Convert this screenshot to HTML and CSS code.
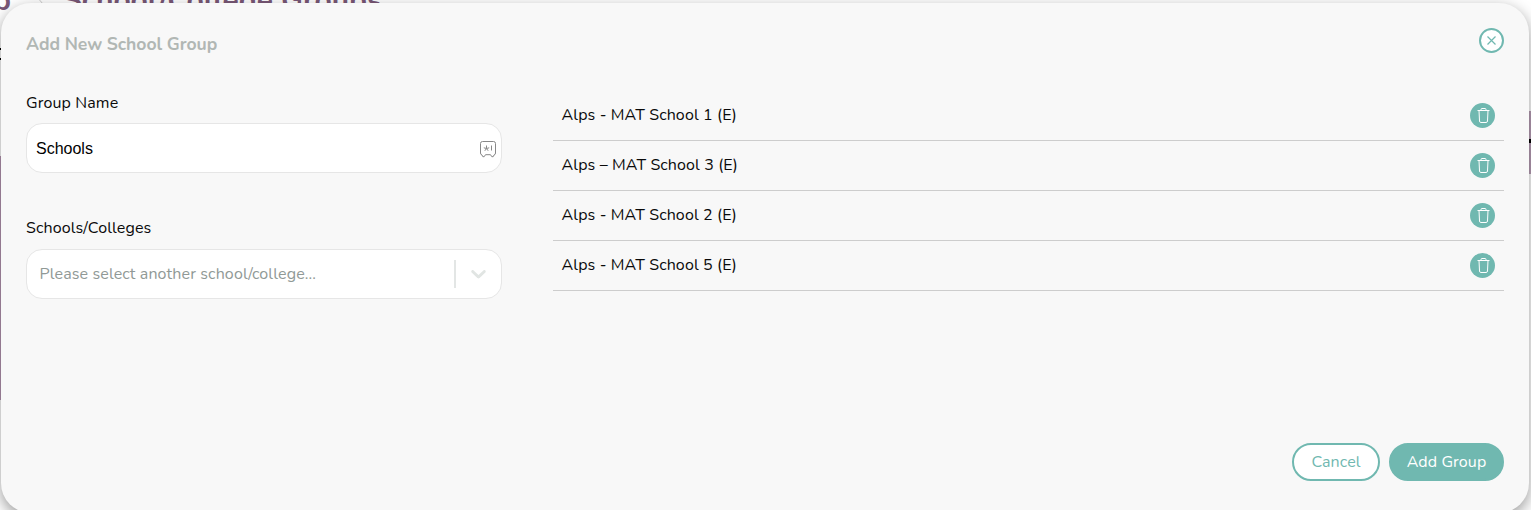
FILE: index.html
```html
<!DOCTYPE html>
<html lang="en">
<head>
<meta charset="utf-8">
<title>School/College Groups</title>
<link rel="stylesheet" href="styles.css">
</head>
<body>
<div class="backdrop">
  <span class="crumb-end">p</span>
  <svg class="crumb-arrow" width="10" height="16" viewBox="0 0 10 16"><path d="M1 4l6 7"/></svg>
  <h1 class="page-title">School/College Groups</h1>
  <span class="left-mark"></span>
  <span class="left-panel"></span>
  <span class="right-panel"></span>
  <span class="right-mark"></span>
</div>
<main class="modal">
  <header class="modal-header">
    <h2 class="modal-title">Add New School Group</h2>
    <button class="close" aria-label="Close"><svg width="9" height="9" viewBox="0 0 9 9"><path d="M.5.5l8 8M8.500.5l-8 8"/></svg></button>
  </header>
  <div class="content">
    <section class="form">
      <label class="label label-name">Group Name</label>
      <div class="field">
        <span class="value">Schools</span>
        <svg class="safe" width="16" height="17" viewBox="0 0 16 17"><path d="M2.500.5h11a2 2 0 0 1 2 2v9.500a2 2 0 0 1-1.500 2l-.8 1.700h-1.400l-1.300-2h-5l-1.300 2H2.800L2 14a2 2 0 0 1-1.500-2V2.500a2 2 0 0 1 2-2z"/><path d="M6.500 4.500v3M3.800 6.800l2.700.7 2.700-.7M4.800 9.800l1.700-2.300 1.700 2.300M11.500 4.500v5"/></svg>
      </div>
      <label class="label label-schools">Schools/Colleges</label>
      <div class="field select">
        <span class="placeholder">Please select another school/college...</span>
        <span class="divider"></span>
        <svg class="chevron" width="25" height="25" viewBox="0 0 20 20"><path d="M4.516 7.548c0.436-0.446 1.043-0.481 1.576 0l3.908 3.747 3.908-3.747c0.533-0.481 1.141-0.446 1.574 0 0.436 0.445 0.408 1.197 0 1.615-0.406 0.418-4.695 4.502-4.695 4.502-0.217 0.223-0.502 0.335-0.787 0.335s-0.570-0.112-0.789-0.335c0 0-4.287-4.084-4.695-4.502s-0.436-1.170 0-1.615z"/></svg>
      </div>
    </section>
    <ul class="schools">
      <li class="school"><span class="school-name">Alps - MAT School 1 (E)</span><button class="remove" aria-label="Remove"><svg width="13" height="15" viewBox="0 0 13 15"><path d="M.5 2.500h12M4 2.500V1.500q0-1 1-1h3q1 0 1 1V2.500M2 2.500l.5 10.500q.1 1.500 1.400 1.500h5.200q1.300 0 1.400-1.500L11 2.500"/></svg></button></li>
      <li class="school"><span class="school-name">Alps – MAT School 3 (E)</span><button class="remove" aria-label="Remove"><svg width="13" height="15" viewBox="0 0 13 15"><path d="M.5 2.500h12M4 2.500V1.500q0-1 1-1h3q1 0 1 1V2.500M2 2.500l.5 10.500q.1 1.500 1.400 1.500h5.200q1.300 0 1.400-1.500L11 2.500"/></svg></button></li>
      <li class="school"><span class="school-name">Alps - MAT School 2 (E)</span><button class="remove" aria-label="Remove"><svg width="13" height="15" viewBox="0 0 13 15"><path d="M.5 2.500h12M4 2.500V1.500q0-1 1-1h3q1 0 1 1V2.500M2 2.500l.5 10.500q.1 1.500 1.400 1.500h5.200q1.300 0 1.400-1.500L11 2.500"/></svg></button></li>
      <li class="school"><span class="school-name">Alps - MAT School 5 (E)</span><button class="remove" aria-label="Remove"><svg width="13" height="15" viewBox="0 0 13 15"><path d="M.5 2.500h12M4 2.500V1.500q0-1 1-1h3q1 0 1 1V2.500M2 2.500l.5 10.500q.1 1.500 1.400 1.500h5.200q1.300 0 1.400-1.500L11 2.500"/></svg></button></li>
    </ul>
  </div>
  <footer class="actions">
    <button class="btn cancel">Cancel</button>
    <button class="btn primary">Add Group</button>
  </footer>
</main>
</body>
</html>
```

FILE: styles.css
```css
* { box-sizing: border-box; margin: 0; padding: 0; }
body {
  height: 510px;
  overflow: hidden;
  background: #fff;
  color: #0a0a0a;
  font: 16px/22px Nunito, Lato, sans-serif;
  letter-spacing: .12px;
}
button { font: inherit; }
.backdrop { position: absolute; inset: 0; overflow: hidden; color: #7a5877; }
.backdrop > * { position: absolute; }
.crumb-end { left: -7px; top: -17px; font-size: 30px; font-weight: 700; line-height: 36px; }
.crumb-arrow { left: 36px; top: -7px; fill: none; stroke: #ccc; }
.page-title { left: 63px; top: -17px; font-size: 30px; line-height: 36px; letter-spacing: -.08px; white-space: nowrap; }
.left-mark { left: 0; top: 48px; width: 1px; height: 12px; border: solid #000; border-width: 2px 0; }
.left-panel { left: 0; top: 156px; width: 2px; height: 244px; background: #b596b2; }
.right-panel { right: 0; top: 111px; width: 4px; height: 63px; background: #b89eb6; }
.right-mark { right: 0; top: 139px; width: 2px; height: 4px; background: #000; }
.modal {
  position: relative;
  display: flex;
  flex-direction: column;
  width: 1528px;
  height: 510px;
  margin: 3px 0 0 1px;
  padding: 25px 25px 32px;
  border-radius: 30px;
  background: #f8f8f8;
  box-shadow: 0 5px 15px rgba(0, 0, 0, .4);
}
.modal-header { display: flex; justify-content: space-between; height: 64px; }
.modal-title { padding-top: 5px; color: #b1b7b4; font-size: 17.600px; line-height: 22px; letter-spacing: -.05px; }
.close {
  display: grid;
  place-items: center;
  width: 25px;
  height: 25px;
  border: 2px solid #70b8b0;
  border-radius: 50%;
  background: #fff;
}
.close svg { fill: none; stroke: #70b8b0; stroke-width: 1.2; }
.content { display: flex; gap: 51px; flex: 1; }
.form { width: 476px; }
.label { display: block; }
.label-schools { margin-top: 44px; }
.field {
  display: flex;
  align-items: center;
  height: 50px;
  margin-top: 9px;
  padding: 0 5px 0 9px;
  border: 1px solid #e6e6e6;
  border-radius: 16px;
  background: #fff;
}
.value { flex: 1; padding-top: 2px; color: #000; font-family: "Liberation Sans", sans-serif; letter-spacing: 0; }
.safe { fill: none; stroke: #888; stroke-width: 1; margin-top: 2px; }
.select { padding: 0 10px 0 12.500px; margin-top: 10px; }
.placeholder { flex: 1; color: #909996; }
.divider { width: 2px; height: 28px; background: #e3e6e5; }
.chevron { margin-left: 10px; margin-bottom: 1px; fill: #e1e5e3; }
.schools { flex: 1; margin-top: -1px; list-style: none; }
.school {
  display: flex;
  align-items: center;
  justify-content: space-between;
  height: 50px;
  padding: 0 9px 0 8.500px;
  border-bottom: 1px solid #cdcdcd;
}
.school-name { padding-bottom: 2px; }
.remove {
  display: grid;
  place-items: center;
  width: 25px;
  height: 25px;
  padding-left: 1px;
  border: 0;
  border-radius: 50%;
  background: #70b8b0;
}
.remove svg { fill: none; stroke: #fff; }
.actions { display: flex; justify-content: flex-end; gap: 9px; }
.btn {
  width: 88px;
  height: 38px;
  border: 2px solid #70b8b0;
  border-radius: 19px;
  background: #fff;
  color: #70b8b0;
  letter-spacing: .1px;
}
.primary { width: 115px; background: #70b8b0; color: #fff; }
```
